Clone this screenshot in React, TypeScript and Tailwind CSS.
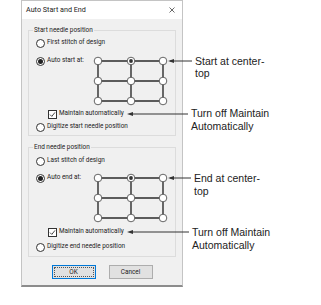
import React from 'react';

function Radio({ checked }: { checked?: boolean }) {
  return (
    <span className="w-[9px] h-[9px] rounded-full border border-[#333] bg-white flex items-center justify-center shrink-0">
      {checked && <span className="w-[5px] h-[5px] rounded-full bg-[#222]" />}
    </span>
  );
}

function Check() {
  return (
    <span className="w-[9px] h-[9px] border border-[#333] bg-white flex items-center justify-center shrink-0">
      <svg width="7" height="7" viewBox="0 0 7 7">
        <path d="M1 3.6 L2.8 5.4 L6 1.4" fill="none" stroke="#333" strokeWidth="0.9" />
      </svg>
    </span>
  );
}

function Grid() {
  const xs = [6, 39, 71];
  const ys = [5, 25, 45];
  return (
    <svg width="78" height="50" className="shrink-0">
      {ys.map((y) => (
        <line key={'h' + y} x1={6} x2={71} y1={y} y2={y} stroke="#2b2b2b" strokeWidth="1.4" />
      ))}
      {xs.map((x) => (
        <line key={'v' + x} x1={x} x2={x} y1={5} y2={45} stroke="#2b2b2b" strokeWidth="1.4" />
      ))}
      {ys.map((y) =>
        xs.map((x) => (
          <circle key={x + '-' + y} cx={x} cy={y} r="3.8" fill="white" stroke="#555" strokeWidth="0.9" />
        ))
      )}
      <circle cx={39} cy={5} r="1.9" fill="#333" />
    </svg>
  );
}

function Row({ children, className = '' }: { children: React.ReactNode; className?: string }) {
  return <div className={`h-[10px] flex items-center gap-[2px] ${className}`}>{children}</div>;
}

function Group({
  title, first, auto, digitize, h, pt, gapAuto, gapCheck, gapDig,
}: {
  title: string; first: string; auto: string; digitize: string;
  h: string; pt: string; gapAuto: string; gapCheck: string; gapDig: string;
}) {
  return (
    <div className={`relative border border-[#dcdcdc] ${h} ${pt}`}>
      <span className="absolute left-[4px] -top-[5px] px-[1px] leading-[9px] bg-[#f0f0f0]">{title}</span>
      <Row className="pl-[7px]">
        <Radio />
        <span>{first}</span>
      </Row>
      <div className={`flex pl-[7px] ${gapAuto}`}>
        <div className="w-[56px]">
          <Row>
            <Radio checked />
            <span>{auto}</span>
          </Row>
        </div>
        <Grid />
      </div>
      <Row className={`pl-[19px] ${gapCheck}`}>
        <Check />
        <span>Maintain automatically</span>
      </Row>
      <Row className={`pl-[7px] ${gapDig}`}>
        <Radio />
        <span>{digitize}</span>
      </Row>
    </div>
  );
}

export default function App() {
  return (
    <div className="relative w-[321px] h-[305px] bg-white overflow-hidden">
      <div className="ml-[21px] w-[162px] border border-[#c4c4c4] border-b-2 border-b-[#8c8c8c] flex flex-col text-[6.4px] text-[#222] font-['Roboto',sans-serif]">
        <div className="h-[18px] bg-white flex items-center justify-between pl-[4px] pr-[7px]">
          <span className="text-[7.2px]">Auto Start and End</span>
          <svg width="6" height="6" viewBox="0 0 6 6">
            <path d="M0.5 0.5 L5.5 5.5 M5.5 0.5 L0.5 5.5" stroke="#444" strokeWidth="0.8" />
          </svg>
        </div>
        <div className="bg-[#f0f0f0] px-[6px] pt-[11px] pb-[6px] flex flex-col">
          <Group
            title="Start needle position"
            first="First stitch of design"
            auto="Auto start at:"
            digitize="Digitize start needle position"
            h="h-[106px]"
            pt="pt-[7px]"
            gapAuto="mt-[8px]"
            gapCheck="mt-[3px]"
            gapDig="mt-[3px]"
          />
          <div className="mt-[11px]">
            <Group
              title="End needle position"
              first="Last stitch of design"
              auto="Auto end at:"
              digitize="Digitize end needle position"
              h="h-[110px]"
              pt="pt-[8px]"
              gapAuto="mt-[7px]"
              gapCheck="mt-[4px]"
              gapDig="mt-[5px]"
            />
          </div>
          <div className="mt-[8px] flex justify-center gap-[13px]">
            <button className="w-[44px] h-[14px] bg-[#e1e1e1] border border-[#0078d7] p-[1px]">
              <span className="w-full h-full border border-dotted border-[#555] flex items-center justify-center leading-none">OK</span>
            </button>
            <button className="w-[44px] h-[14px] bg-[#e1e1e1] border border-[#adadad] flex items-center justify-center leading-none">
              Cancel
            </button>
          </div>
        </div>
      </div>

      <svg className="absolute inset-0 pointer-events-none" width="321" height="305">
        <g stroke="#333" strokeWidth="1" fill="#333">
          <line x1="170" y1="61" x2="192" y2="61" />
          <polygon points="168,61 174,59 174,63" stroke="none" />
          <line x1="130" y1="114" x2="188" y2="114" />
          <polygon points="127,114 133,112 133,116" stroke="none" />
          <line x1="170" y1="178" x2="191" y2="178" />
          <polygon points="168,178 174,176 174,180" stroke="none" />
          <line x1="130" y1="232" x2="189" y2="232" />
          <polygon points="127,232 133,230 133,234" stroke="none" />
        </g>
      </svg>

      <div className="absolute left-[195px] top-[55px] text-[10.5px] leading-[12px] text-[#222] font-['Liberation_Sans',Arial,sans-serif]">
        Start at center-<br />top
      </div>
      <div className="absolute left-[191px] top-[107px] text-[10.5px] leading-[13px] text-[#222] font-['Liberation_Sans',Arial,sans-serif]">
        Turn off Maintain<br />Automatically
      </div>
      <div className="absolute left-[194px] top-[172px] text-[10.5px] leading-[13px] text-[#222] font-['Liberation_Sans',Arial,sans-serif]">
        End at center-<br />top
      </div>
      <div className="absolute left-[192px] top-[226px] text-[10.5px] leading-[13px] text-[#222] font-['Liberation_Sans',Arial,sans-serif]">
        Turn off Maintain<br />Automatically
      </div>
    </div>
  );
}
